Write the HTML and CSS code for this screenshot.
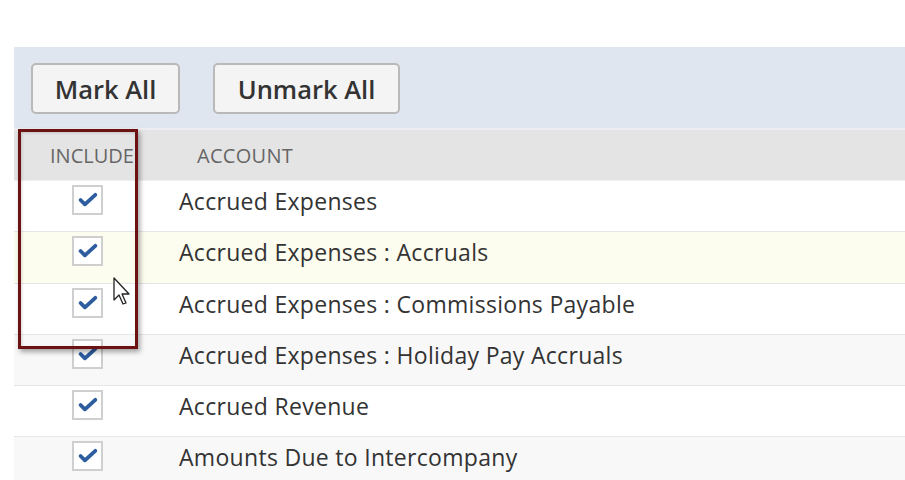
FILE: index.html
```html
<!DOCTYPE html>
<html>
<head>
<meta charset="utf-8">
<link rel="stylesheet" href="styles.css">
</head>
<body>
<div class="page">
  <div class="panel">
    <div class="toolbar">
      <button class="btn btn-mark">Mark All</button>
      <button class="btn btn-unmark">Unmark All</button>
    </div>
    <div class="table">
      <div class="row head">
        <div class="c1">INCLUDE</div>
        <div class="c2">ACCOUNT</div>
      </div>
      <div class="row"><div class="c1"><span class="cb"><svg viewBox="0 0 30 30"><path d="M7 15 L12 20 L24 9"/></svg></span></div><div class="c2">Accrued Expenses</div></div>
      <div class="row hover"><div class="c1"><span class="cb"><svg viewBox="0 0 30 30"><path d="M7 15 L12 20 L24 9"/></svg></span></div><div class="c2">Accrued Expenses : Accruals</div></div>
      <div class="row"><div class="c1"><span class="cb"><svg viewBox="0 0 30 30"><path d="M7 15 L12 20 L24 9"/></svg></span></div><div class="c2">Accrued Expenses : Commissions Payable</div></div>
      <div class="row alt"><div class="c1"><span class="cb"><svg viewBox="0 0 30 30"><path d="M7 15 L12 20 L24 9"/></svg></span></div><div class="c2">Accrued Expenses : Holiday Pay Accruals</div></div>
      <div class="row"><div class="c1"><span class="cb"><svg viewBox="0 0 30 30"><path d="M7 15 L12 20 L24 9"/></svg></span></div><div class="c2">Accrued Revenue</div></div>
      <div class="row alt"><div class="c1"><span class="cb"><svg viewBox="0 0 30 30"><path d="M7 15 L12 20 L24 9"/></svg></span></div><div class="c2">Amounts Due to Intercompany</div></div>
    </div>
  </div>
  <div class="highlight"></div>
  <svg class="cursor" viewBox="0 0 20 30" width="20" height="30"><path d="M1 1 L1 23 L6 18 L10 27 L13 26 L9 17 L16 17 Z" fill="#fff" stroke="#222" stroke-width="1.3" stroke-linejoin="round"/></svg>
</div>
</body>
</html>
```
FILE: styles.css
```css
html, body { margin: 0; padding: 0; background: #fff; }
body { font-family: "Open Sans", "DejaVu Sans", sans-serif; color: #333; }
.page { position: relative; width: 905px; height: 480px; overflow: hidden; padding: 47px 0 0 14px; box-sizing: border-box; }
.panel { width: 891px; }
.toolbar { background: #dfe6f0; padding: 16px 0 0 17px; display: flex; gap: 33px; border-bottom: 2px solid #eceef1; box-sizing: content-box; height: 65px; }
.btn { height: 51px; font-family: "Open Sans", sans-serif; font-size: 25.5px; font-weight: 600; color: #333; background: #f4f4f4; border: 2px solid #b9b9b9; border-radius: 5px; padding: 0; }
.btn-mark { width: 149px; }
.btn-unmark { width: 187px; }
.row { display: grid; grid-template-columns: 147px 1fr; height: 51.25px; box-sizing: border-box; align-items: start; padding-top: 4px; border-bottom: 1px solid #e6e6e6; background: #fff; }
.row.head { background: #e4e4e4; height: 51px; align-items: center; padding-top: 0; font-size: 20px; color: #666; border-bottom: 1px solid #f0f0f0; }
.row.head .c1 { padding-left: 36px; }
.row.head .c2 { padding-left: 36px; padding-top: 0; font-size: 20px; }
.row.hover { background: #fcfcef; }
.row.alt { background: #f8f8f8; }
.c2 { font-size: 23px; letter-spacing: 0.3px; line-height: 31px; padding-left: 18px; padding-top: 1px; white-space: nowrap; }
.c1 { display: flex; justify-content: center; }
.head .c1 { justify-content: flex-start; }
.cb { width: 31px; height: 30px; box-sizing: border-box; border: 2px solid #cfcfcf; background: #fff; display: block; }
.cb svg { width: 27px; height: 26px; display: block; }
.cb path { fill: none; stroke: #2d5d9f; stroke-width: 4.4; stroke-linecap: round; stroke-linejoin: round; }
.highlight { position: absolute; left: 18px; top: 129px; width: 120px; height: 220px; box-sizing: border-box; border: 3px solid #6c1212; box-shadow: 2px 3px 5px rgba(0,0,0,0.35), inset 1px 1px 3px rgba(0,0,0,0.15); }
.cursor { position: absolute; left: 113px; top: 277px; }
```
